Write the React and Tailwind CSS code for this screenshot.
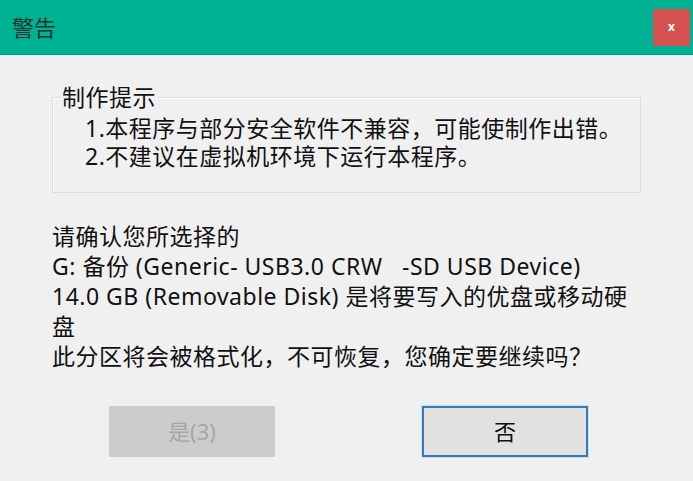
export default function App() {
  return (
    <div
      className="h-[481px] w-[693px] overflow-hidden bg-[#f0f0f0] text-[#111]"
      style={{ fontFamily: '"Noto Sans", "Noto Sans CJK SC", sans-serif' }}
    >
      {/* title bar */}
      <div className="flex h-[55px] items-center justify-between border-b border-[#02977e] bg-[#00b294] pl-[12px] pr-[3px]">
        <span className="text-[22px] leading-none text-[#17332d]">警告</span>
        <button
          type="button"
          className="flex h-[37px] w-[37px] items-center justify-center bg-[#d4514f] text-[12px] font-bold leading-none text-white"
        >
          x
        </button>
      </div>
      <div className="h-[2px] bg-[#dff3f0]" />

      <div className="px-[52px] tracking-[0.5px]">
        <fieldset className="mt-[27px] h-[109px] border border-[#dcdcdc] pb-[18px] pl-[7px] pt-[4px] shadow-[inset_1px_1px_0_#fbfbfb]">
          <legend className="px-[2px] text-[23px] leading-[26px]">制作提示</legend>
          <div className="pl-[25px] text-[23px] leading-[28px]">
            <div>1.本程序与部分安全软件不兼容，可能使制作出错。</div>
            <div>2.不建议在虚拟机环境下运行本程序。</div>
          </div>
        </fieldset>

        <div className="mt-[28px] text-[23px] leading-[30px]">
          <div>请确认您所选择的</div>
          <div className="whitespace-pre">G: 备份 (Generic- USB3.0 CRW   -SD USB Device)</div>
          <div>14.0 GB (Removable Disk) 是将要写入的优盘或移动硬</div>
          <div>盘</div>
          <div>此分区将会被格式化，不可恢复，您确定要继续吗？</div>
        </div>

        <div className="ml-[57px] mt-[35px] flex gap-[147px] tracking-normal">
          <button
            type="button"
            className="flex h-[51px] w-[166px] items-center justify-center bg-[#cccccc] text-[22px] text-[#a6a6a6]"
          >
            是(3)
          </button>
          <button
            type="button"
            className="flex h-[51px] w-[166px] items-center justify-center border-2 border-[#3b79ad] bg-[#e1e1e1] text-[22px] text-[#111] shadow-[0_0_0_1px_#bfe2fa]"
          >
            否
          </button>
        </div>
      </div>
    </div>
  );
}
